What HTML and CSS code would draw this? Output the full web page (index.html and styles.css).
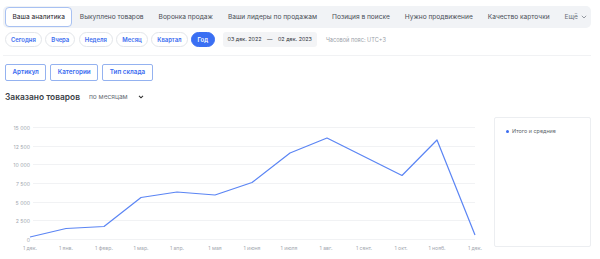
FILE: index.html
```html
<!DOCTYPE html>
<html lang="ru">
<head>
<meta charset="utf-8">
<link rel="stylesheet" href="styles.css">
</head>
<body>
<div class="page">
  <nav class="tabs">
    <span class="tab active">Ваша аналитика</span>
    <span class="tab">Выкуплено товаров</span>
    <span class="tab">Воронка продаж</span>
    <span class="tab">Ваши лидеры по продажам</span>
    <span class="tab">Позиция в поиске</span>
    <span class="tab">Нужно продвижение</span>
    <span class="tab">Качество карточки</span>
    <span class="tab more">Ещё <svg class="chev" width="6" height="4" viewBox="0 0 6 4"><path d="M0.8 0.8 L3 3 L5.2 0.8" fill="none" stroke="currentColor" stroke-width="0.9"/></svg></span>
  </nav>

  <div class="periods">
    <span class="pill">Сегодня</span>
    <span class="pill">Вчера</span>
    <span class="pill">Неделя</span>
    <span class="pill">Месяц</span>
    <span class="pill">Квартал</span>
    <span class="pill selected">Год</span>
    <span class="dates"><span>03 дек. 2022</span><span class="dash">—</span><span>02 дек. 2023</span></span>
    <span class="tz">Часовой пояс: UTC+3</span>
  </div>

  <div class="filters">
    <span class="fbtn">Артикул</span>
    <span class="fbtn">Категории</span>
    <span class="fbtn">Тип склада</span>
  </div>

  <div class="title-row">
    <h2 class="title">Заказано товаров</h2>
    <span class="group">по месяцам</span>
    <svg class="chev-dark" width="6" height="4" viewBox="0 0 6 4"><path d="M1 0.8 L3 2.8 L5 0.8" fill="none" stroke="#333" stroke-width="1.1"/></svg>
  </div>

  <div class="chart-row">
    <svg class="chart" width="486" height="140" viewBox="0 110 486 140">
      <g class="grid" stroke="#f1f2f4" stroke-width="1">
        <line x1="30" x2="472" y1="126.5" y2="126.5"/>
        <line x1="30" x2="472" y1="145.5" y2="145.5"/>
        <line x1="30" x2="472" y1="163.5" y2="163.5"/>
        <line x1="30" x2="472" y1="182.5" y2="182.5"/>
        <line x1="30" x2="472" y1="201.5" y2="201.5"/>
        <line x1="30" x2="472" y1="219.5" y2="219.5"/>
        <line x1="30" x2="472" y1="238.5" y2="238.5"/>
      </g>
      <g class="ylab" text-anchor="end">
        <text x="27" y="128.5">15 000</text>
        <text x="27" y="147.5">12 500</text>
        <text x="27" y="165.5">10 000</text>
        <text x="27" y="184.5">7 500</text>
        <text x="27" y="203.5">5 000</text>
        <text x="27" y="221.5">2 500</text>
        <text x="27" y="240.5">0</text>
      </g>
      <g class="xlab" text-anchor="middle">
        <text x="27" y="249">1 дек.</text>
        <text x="63" y="249">1 янв.</text>
        <text x="101" y="249">1 февр.</text>
        <text x="138" y="249">1 мар.</text>
        <text x="174" y="249">1 апр.</text>
        <text x="212" y="249">1 мая</text>
        <text x="249" y="249">1 июня</text>
        <text x="286" y="249">1 июля</text>
        <text x="323" y="249">1 авг.</text>
        <text x="361" y="249">1 сент.</text>
        <text x="398" y="249">1 окт.</text>
        <text x="434" y="249">1 нояб.</text>
        <text x="472" y="249">1 дек.</text>
      </g>
      <polyline fill="none" stroke="#5b85f4" stroke-width="1.2" stroke-linejoin="round"
        points="27,236 63,227.5 101,225.5 138,196.5 174,191 212,194 249,181.5 287,152 324,137 361,155.5 399,174.5 434,139 472,234"/>
    </svg>
    <div class="legend">
      <span class="dot"></span><span>Итого и средние</span>
    </div>
  </div>
</div>
</body>
</html>
```

FILE: styles.css
```css
* { box-sizing: border-box; }
html, body { margin: 0; padding: 0; background: #fff; }
body {
  font-family: Inter, "Noto Sans", "Liberation Sans", sans-serif;
  color: #2b2f36;
  width: 600px;
  height: 259px;
  overflow: hidden;
}
.page { padding: 6px 9px 0 3px; }

.tabs {
  display: flex;
  align-items: center;
  height: 22px;
  background: #f1f3f6;
  border-radius: 5px;
  padding: 0 2px;
}
.tab {
  font-size: 6.6px;
  color: #4a4f57;
  padding: 0 7.5px;
  height: 20px;
  white-space: nowrap;
  display: flex;
  align-items: center;
}
.tab.active {
  background: #fff;
  color: #1f232a;
  border: 1px solid #a8c1f2;
  border-radius: 4px;
  padding: 0 6.5px;
}
.tab.more { margin-left: auto; padding-right: 7px; color: #6a6f77; }
.chev { margin-left: 3px; color: #8a9099; }

.periods {
  display: flex;
  align-items: center;
  margin: 4px 0 0 2px;
  height: 15px;
}
.pill {
  height: 15px;
  line-height: 13px;
  border: 1px solid #e3e6ea;
  border-radius: 8px;
  padding: 0 5px;
  font-size: 5.9px;
  font-weight: 600;
  color: #3b6cf0;
  margin-right: 3.5px;
  white-space: nowrap;
}
.pill.selected {
  background: #3a6ff3;
  border-color: #3a6ff3;
  color: #fff;
  padding: 0 5.5px;
}
.dates {
  margin-left: 4.5px;
  height: 15px;
  line-height: 15px;
  background: #f3f4f6;
  border-radius: 3px;
  padding: 0 5px;
  font-size: 5.4px;
  color: #2d3138;
  display: flex;
  white-space: nowrap;
}
.dash { margin: 0 5.5px; }
.tz {
  margin-left: 9px;
  font-size: 5.6px;
  color: #9aa0a8;
  white-space: nowrap;
}

.filters {
  display: flex;
  gap: 4px;
  margin-top: 8px;
  padding-top: 8px;
  border-top: 1px solid #f1f2f4;
  padding-left: 2px;
}
.fbtn {
  height: 17px;
  line-height: 15px;
  border: 1px solid #94b2f0;
  border-radius: 2px;
  padding: 0 6.5px;
  font-size: 6.3px;
  font-weight: 600;
  color: #3b6cf0;
  white-space: nowrap;
}

.title-row {
  display: flex;
  align-items: center;
  margin: 9px 0 0 2px;
  height: 14px;
}
.title {
  margin: 0;
  font-size: 8.4px;
  font-weight: 600;
  color: #3a3e46;
}
.group {
  margin-left: 9px;
  font-size: 6.6px;
  color: #6a6f77;
}
.chev-dark { margin-left: 10px; }

.chart-row {
  display: flex;
  margin-top: 7px;
}
.chart { display: block; flex: none; }
.ylab text, .xlab text {
  font-size: 5.2px;
  fill: #a3a8b0;
  font-family: Inter, "Noto Sans", sans-serif;
}
.legend {
  margin: 6px 0 0 5px;
  width: 98px;
  height: 130px;
  border: 1px solid #eceef1;
  border-radius: 2px;
  padding: 10px 0 0 11px;
  font-size: 5.4px;
  color: #5a5f68;
  display: flex;
  align-items: flex-start;
  gap: 3px;
}
.dot {
  width: 3px;
  height: 3px;
  border-radius: 50%;
  background: #3b6cf0;
  margin-top: 2px;
  flex: none;
}
```
